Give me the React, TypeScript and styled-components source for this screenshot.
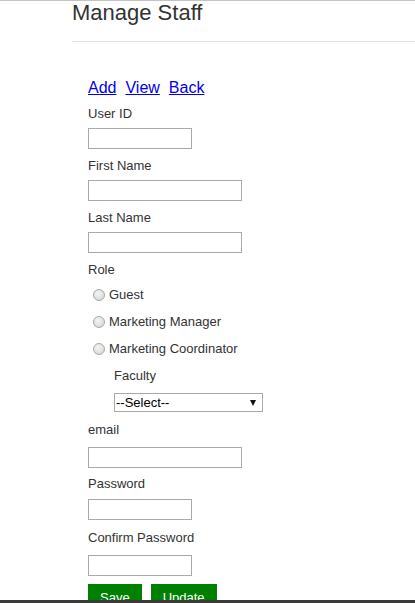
import React from "react";
import styled, { createGlobalStyle } from "styled-components";

const Global = createGlobalStyle`
  html, body { margin: 0; padding: 0; background: #fff; overflow: hidden; }
  body { font-family: "Liberation Sans", Arial, sans-serif; color: #333; }
  * { box-sizing: border-box; }
`;

const TopLine = styled.div`
  position: fixed;
  top: 0;
  left: 0;
  right: 0;
  height: 1px;
  background: #c4c4c4;
`;

const BottomBar = styled.div`
  position: fixed;
  bottom: 0;
  left: 0;
  right: 0;
  height: 3px;
  background: #3a3a3a;
`;

const Page = styled.div`
  padding-left: 72px;
`;

const Title = styled.h2`
  margin: 0;
  font-size: 22px;
  line-height: 26px;
  font-weight: normal;
  color: #333;
`;

const Rule = styled.hr`
  margin: 15px 0 0 0;
  border: 0;
  border-top: 1px solid #e2e2e2;
  height: 0;
`;

const Form = styled.div`
  padding-left: 16px;
  display: flex;
  flex-direction: column;
  align-items: flex-start;
`;

const LinkRow = styled.nav`
  margin-top: 36px;
  display: flex;
  gap: 9px;
  font-size: 16px;
  line-height: 20px;
`;

const NavLink = styled.a`
  color: #0000ee;
  text-decoration: underline;
`;

const Field = styled.div<{ $top: number; $gap: number; $indent?: number }>`
  display: flex;
  flex-direction: column;
  align-items: flex-start;
  margin-top: ${(p) => p.$top}px;
  margin-left: ${(p) => p.$indent ?? 0}px;
  gap: ${(p) => p.$gap}px;
`;

const Label = styled.label`
  font-size: 13px;
  line-height: 18px;
  color: #333;
`;

const TextBox = styled.input<{ $w: number }>`
  width: ${(p) => p.$w}px;
  height: 21px;
  border: 1px solid #a9a9a9;
  background: #fff;
  padding: 1px 3px;
  font-family: inherit;
  font-size: 13px;
  outline: none;
`;

const RadioList = styled.div`
  margin-top: 2px;
  display: flex;
  flex-direction: column;
`;

const RadioRow = styled.label`
  height: 27px;
  display: flex;
  align-items: center;
  gap: 4px;
  padding-left: 5px;
  font-size: 13px;
  color: #333;
`;

const Radio = styled.input`
  appearance: none;
  -webkit-appearance: none;
  margin: 0;
  width: 12px;
  height: 12px;
  border-radius: 50%;
  border: 1px solid #a8a8a8;
  background: radial-gradient(circle at 40% 35%, #f4f4f4 0%, #e2e2e2 55%, #cfcfcf 100%);
`;

const SelectWrap = styled.div`
  position: relative;
  width: 149px;
  height: 19px;
  &::after {
    content: "";
    position: absolute;
    right: 7px;
    top: 7px;
    border-left: 3px solid transparent;
    border-right: 3px solid transparent;
    border-top: 6px solid #111;
    pointer-events: none;
  }
`;

const Select = styled.select`
  appearance: none;
  -webkit-appearance: none;
  width: 100%;
  height: 100%;
  border: 1px solid #a9a9a9;
  border-radius: 0;
  background: #fff;
  padding: 0 0 0 1px;
  font-family: inherit;
  font-size: 13px;
  color: #000;
  outline: none;
`;

const Buttons = styled.div`
  margin-top: 8px;
  display: flex;
  gap: 9px;
`;

const Button = styled.button`
  background: #008000;
  color: #fff;
  border: 0;
  border-radius: 0;
  padding: 6px 12px 9px;
  font-family: inherit;
  font-size: 13px;
  line-height: 15px;
`;

export default function App() {
  return (
    <>
      <Global />
      <TopLine />
      <Page>
        <Title>Manage Staff</Title>
        <Rule />
        <Form>
          <LinkRow>
            <NavLink href="#">Add</NavLink>
            <NavLink href="#">View</NavLink>
            <NavLink href="#">Back</NavLink>
          </LinkRow>

          <Field $top={7} $gap={5}>
            <Label>User ID</Label>
            <TextBox $w={104} />
          </Field>
          <Field $top={8} $gap={5}>
            <Label>First Name</Label>
            <TextBox $w={154} />
          </Field>
          <Field $top={8} $gap={5}>
            <Label>Last Name</Label>
            <TextBox $w={154} />
          </Field>

          <Field $top={8} $gap={0}>
            <Label>Role</Label>
            <RadioList>
              <RadioRow>
                <Radio type="radio" name="role" />
                Guest
              </RadioRow>
              <RadioRow>
                <Radio type="radio" name="role" />
                Marketing Manager
              </RadioRow>
              <RadioRow>
                <Radio type="radio" name="role" />
                Marketing Coordinator
              </RadioRow>
            </RadioList>
          </Field>

          <Field $top={5} $gap={8} $indent={26}>
            <Label>Faculty</Label>
            <SelectWrap>
              <Select defaultValue="">
                <option value="">--Select--</option>
              </Select>
            </SelectWrap>
          </Field>

          <Field $top={9} $gap={8}>
            <Label>email</Label>
            <TextBox $w={154} />
          </Field>
          <Field $top={7} $gap={6}>
            <Label>Password</Label>
            <TextBox $w={104} type="password" />
          </Field>
          <Field $top={9} $gap={8}>
            <Label>Confirm Password</Label>
            <TextBox $w={104} type="password" />
          </Field>

          <Buttons>
            <Button>Save</Button>
            <Button>Update</Button>
          </Buttons>
        </Form>
      </Page>
      <BottomBar />
    </>
  );
}
